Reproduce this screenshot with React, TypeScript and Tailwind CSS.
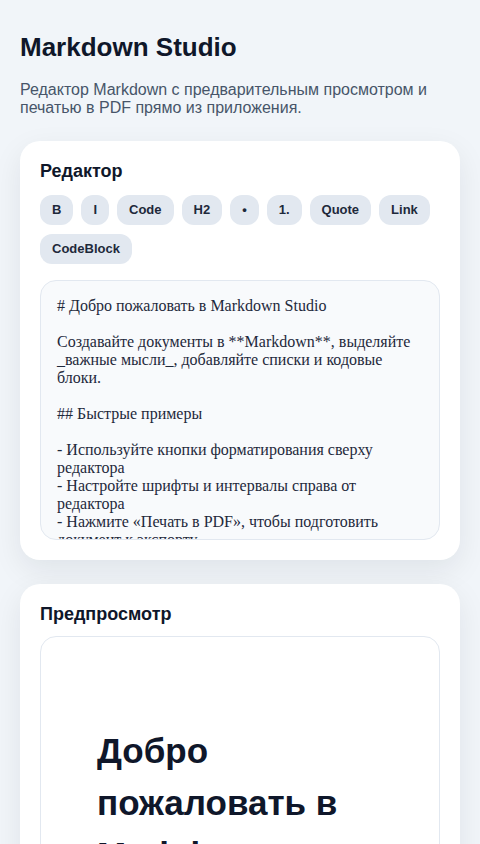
import React from "react";

const tools = ["B", "I", "Code", "H2", "•", "1.", "Quote", "Link", "CodeBlock"];

const source = `# Добро пожаловать в Markdown Studio

Создавайте документы в **Markdown**, выделяйте _важные мысли_, добавляйте списки и кодовые блоки.

## Быстрые примеры

- Используйте кнопки форматирования сверху редактора
- Настройте шрифты и интервалы справа от редактора
- Нажмите «Печать в PDF», чтобы подготовить документ к экспорту

> Совет: предпросмотр обновляется сразу.`;

export default function App() {
  return (
    <div className="min-h-screen bg-[#f1f5f9] px-5 pt-8 pb-10 font-['Liberation_Sans',sans-serif] text-[#0f172a]">
      <h1 className="text-[26px] font-bold leading-[30px]">Markdown Studio</h1>
      <p className="mt-[19px] text-[16px] leading-[18px] text-[#475569]">
        Редактор Markdown с предварительным просмотром и печатью в PDF прямо из приложения.
      </p>

      <section className="mt-6 rounded-[20px] bg-white p-5 shadow-[0_10px_30px_rgba(15,23,42,0.08)]">
        <h2 className="text-[18px] font-bold leading-5">Редактор</h2>
        <div className="mt-[14px] flex flex-wrap gap-x-2 gap-y-[9px]">
          {tools.map((t) => (
            <button
              key={t}
              className="h-[30px] rounded-xl bg-[#e2e8f0] px-3 text-[13px] font-bold text-[#1e293b]"
            >
              {t}
            </button>
          ))}
        </div>
        <div className="mt-4 h-[260px] overflow-hidden rounded-2xl border border-[#e2e8f0] bg-[#f8fafc] p-4 font-['Liberation_Serif',serif] text-[16px] leading-[18px] whitespace-pre-wrap text-[#1e293b]">
          {source}
        </div>
      </section>

      <section className="mt-6 rounded-[20px] bg-white p-5 shadow-[0_10px_30px_rgba(15,23,42,0.08)]">
        <h2 className="text-[18px] font-bold leading-5">Предпросмотр</h2>
        <div className="mt-3 rounded-2xl border border-[#e2e8f0] bg-white p-6">
          <article className="p-8">
            <h1 className="mt-8 text-[35px] font-bold leading-[52px] text-[#0f172a]">
              Добро пожаловать в Markdown Studio
            </h1>
            <p className="mt-4 text-[16px] leading-6 text-[#1e293b]">
              Создавайте документы в <strong>Markdown</strong>, выделяйте <em>важные мысли</em>, добавляйте списки и кодовые блоки.
            </p>
          </article>
        </div>
      </section>
    </div>
  );
}
